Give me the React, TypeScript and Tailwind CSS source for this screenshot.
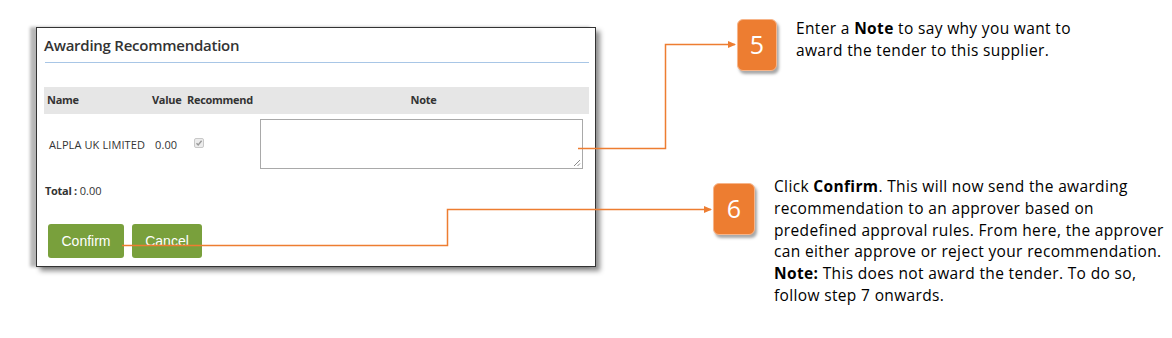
import React from "react";

const ORANGE = "#ed7d31";

const Badge = ({ n, w }: { n: string; w: string }) => {
  return (
    <div
      className={`${w} h-[52px] flex-none flex items-center justify-center rounded-[6px] bg-[#ed7d31] border border-[#f7b58a] text-white text-[25px] shadow-[2px_3px_3px_rgba(0,0,0,0.35)]`}
      style={{ fontFamily: "'Open Sans', sans-serif" }}
    >
      {n}
    </div>
  );
};

const Dialog = () => {
  return (
    <div
      className="ml-[36px] mt-[27px] w-[560px] h-[240px] flex-none flex flex-col border border-[#333] bg-white text-[#333] shadow-[-6px_0_3px_rgba(0,0,0,0.28),4px_4px_5px_rgba(0,0,0,0.45)]"
      style={{ fontFamily: "'Open Sans', sans-serif" }}
    >
      <div className="pl-[7px] pt-[7px] text-[15px] leading-[20px] font-semibold tracking-[-0.25px]">
        Awarding Recommendation
      </div>
      <div className="ml-[8px] mr-[6px] mt-[7px] h-[1px] bg-[#a8c6e6]"></div>
      <div className="ml-[7px] mr-[6px] mt-[24px] h-[27px] flex items-center bg-[#e6e6e6] text-[11px] font-bold tracking-[-0.3px]">
        <div className="w-[105px] pl-[3px]">Name</div>
        <div className="w-[35px] pl-[3px]">Value</div>
        <div className="w-[74px] pl-[3px]">Recommend</div>
        <div className="flex-1 text-center">Note</div>
      </div>
      <div className="ml-[7px] mr-[6px] mt-[5px] flex items-center text-[11px] tracking-[0.1px]">
        <div className="w-[105px] pl-[5px] pt-[3px] whitespace-nowrap">ALPLA UK LIMITED</div>
        <div className="w-[35px] pl-[6px] pt-[3px]">0.00</div>
        <div className="w-[74px] pl-[10px] pb-[2px]">
          <div className="w-[10px] h-[10px] rounded-[2px] border border-[#c8c8c8] bg-[#ececec] flex items-center justify-center">
            <svg width="8" height="8" viewBox="0 0 8 8">
              <path d="M1.5 4.2 L3.2 6 L6.6 1.8" stroke="#9a9a9a" strokeWidth="1.4" fill="none" />
            </svg>
          </div>
        </div>
        <div className="relative ml-[2px] w-[323px] h-[50px] border border-[#a9a9a9] bg-white">
          <svg className="absolute right-[1px] bottom-[1px]" width="9" height="9" viewBox="0 0 9 9">
            <path d="M8 2 L2 8 M8 5.5 L5.5 8" stroke="#8a8a8a" strokeWidth="1" />
          </svg>
        </div>
      </div>
      <div className="ml-[8px] mt-[14px] text-[11px] leading-[15px]">
        <span className="font-bold tracking-[-0.3px]">Total :</span> 0.00
      </div>
      <div
        className="ml-[11px] mt-[26px] flex gap-[8px] text-[14px] text-white"
        style={{ fontFamily: "'Liberation Sans', Arial, sans-serif" }}
      >
        <div className="w-[76px] h-[34px] rounded-[3px] bg-[#79a03c] flex items-center justify-center">
          Confirm
        </div>
        <div className="w-[70px] h-[34px] rounded-[3px] bg-[#79a03c] flex items-center justify-center">
          Cancel
        </div>
      </div>
    </div>
  );
};

export default function App() {
  return (
    <div className="relative w-[1172px] h-[338px] bg-white overflow-hidden flex items-start">
      <Dialog />
      <div
        className="ml-[117px] mt-[19px] flex flex-col text-[15.5px] leading-[21.8px] tracking-[0.35px] text-black"
        style={{ fontFamily: "'Open Sans', sans-serif" }}
      >
        <div className="ml-[24px] flex items-start">
          <Badge n="5" w="w-[40px]" />
          <p className="ml-[19px] -mt-[1px] whitespace-nowrap">
            Enter a <b>Note</b> to say why you want to
            <br />
            award the tender to this supplier.
          </p>
        </div>
        <div className="mt-[112px] flex items-start">
          <Badge n="6" w="w-[42px]" />
          <p className="ml-[19px] -mt-[7px] whitespace-nowrap">
            Click <b>Confirm</b>. This will now send the awarding
            <br />
            recommendation to an approver based on
            <br />
            predefined approval rules. From here, the approver
            <br />
            can either approve or reject your recommendation.
            <br />
            <b>Note:</b> This does not award the tender. To do so,
            <br />
            follow step 7 onwards.
          </p>
        </div>
      </div>
      <svg className="absolute left-0 top-0 pointer-events-none" width="1172" height="338">
        <defs>
          <marker id="arr" markerWidth="8" markerHeight="8" refX="7" refY="4" orient="auto" markerUnits="userSpaceOnUse">
            <path d="M0 0.5 L8 4 L0 7.5 Z" fill={ORANGE} />
          </marker>
        </defs>
        <path d="M578 148.5 H665.5 V44.5 H735" stroke={ORANGE} strokeWidth="1.5" fill="none" markerEnd="url(#arr)" />
        <path d="M122 245.5 H447.5 V209.5 H711" stroke={ORANGE} strokeWidth="1.5" fill="none" markerEnd="url(#arr)" />
      </svg>
    </div>
  );
}
